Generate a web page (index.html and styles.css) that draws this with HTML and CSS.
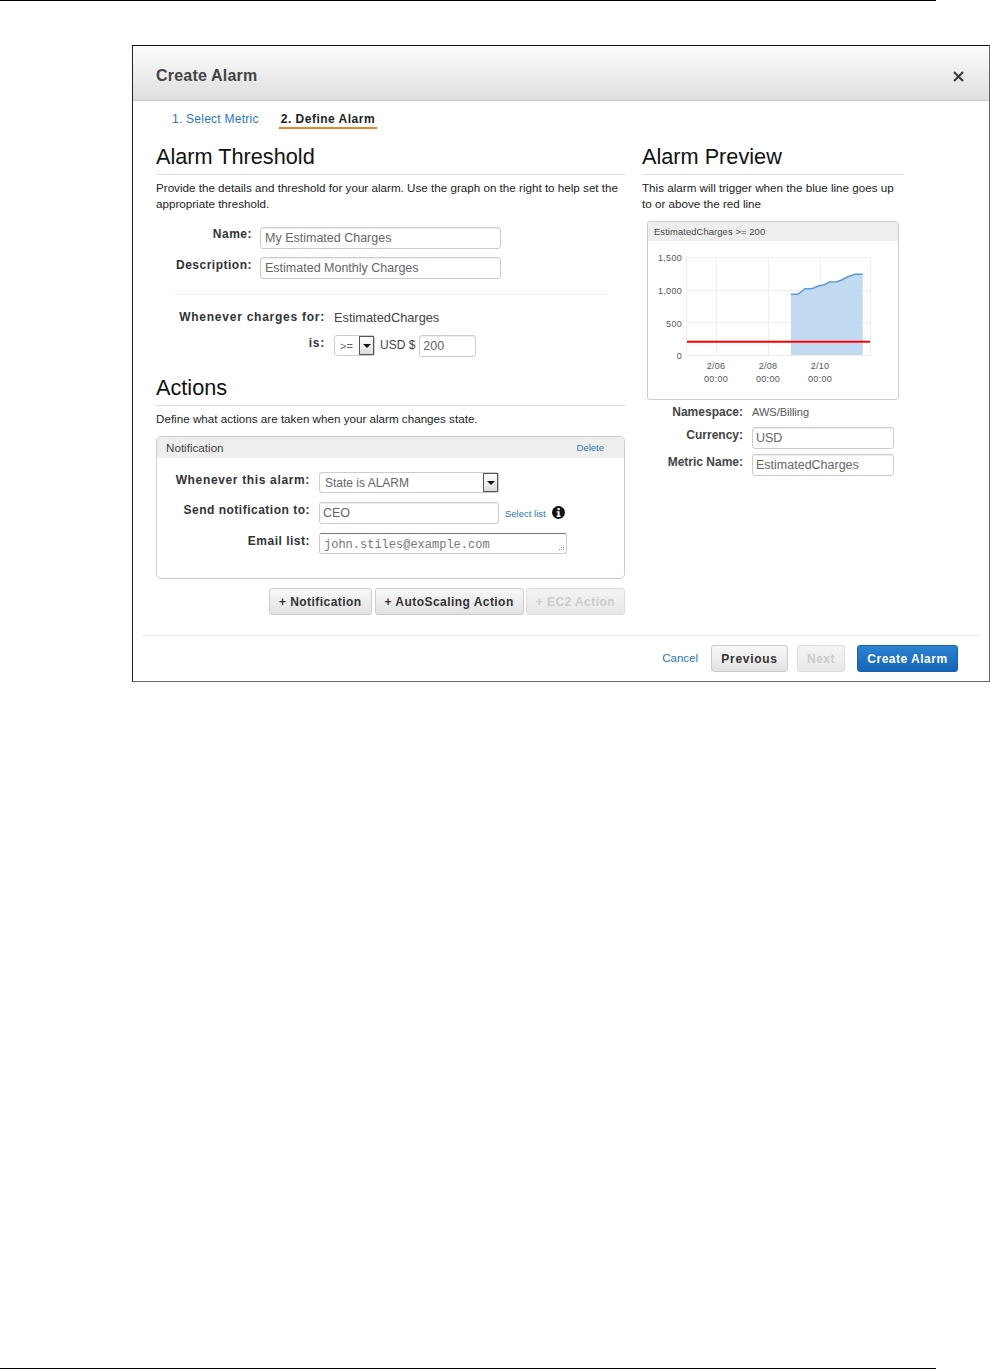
FILE: index.html
```html
<!DOCTYPE html>
<html lang="en">
<head>
<meta charset="utf-8">
<title>Create Alarm</title>
<link rel="stylesheet" href="styles.css">
</head>
<body>
<div class="page">
  <div class="rule"></div>
  <section class="modal">
    <header class="modal-head">
      <h1>Create Alarm</h1>
      <svg class="close" width="11" height="11" viewBox="0 0 11 11"><path d="M1 1 L10 10 M10 1 L1 10" fill="none" stroke="#3f3f3f" stroke-width="2.2"/></svg>
    </header>
    <nav class="tabs">
      <a class="tab">1. Select Metric</a>
      <a class="tab current">2. Define Alarm</a>
    </nav>
    <div class="body">
      <div class="col-left">
        <h2>Alarm Threshold</h2>
        <p class="intro">Provide the details and threshold for your alarm. Use the graph on the right to help set the appropriate threshold.</p>
        <div class="rows">
          <div class="row"><span class="label w-name">Name:</span><div class="field w-wide">My Estimated Charges</div></div>
          <div class="row"><span class="label w-name">Description:</span><div class="field w-wide">Estimated Monthly Charges</div></div>
        </div>
        <div class="divider"></div>
        <div class="row charges"><span class="label w-when">Whenever charges for:</span><span class="value">EstimatedCharges</span></div>
        <div class="row is-row">
          <span class="label w-when">is:</span>
          <div class="select w-op">&gt;=<span class="arrow"></span></div>
          <span class="value usd">USD $</span>
          <div class="field w-amount">200</div>
        </div>
        <h2 class="actions-title">Actions</h2>
        <p class="intro">Define what actions are taken when your alarm changes state.</p>
        <div class="box">
          <div class="box-head"><span>Notification</span><a class="link small">Delete</a></div>
          <div class="box-body">
            <div class="row"><span class="label w-notif track">Whenever this alarm:</span><div class="select w-state">State is ALARM<span class="arrow"></span></div></div>
            <div class="row"><span class="label w-notif">Send notification to:</span><div class="field w-state">CEO</div><a class="link small select-list">Select list</a>
              <svg class="info" width="13" height="13" viewBox="0 0 13 13"><circle cx="6.5" cy="6.5" r="6.5" fill="#111"/><rect x="5.5" y="2" width="2.2" height="2.2" fill="#fff"/><path d="M4.6 5.3 H7.6 V9.6 H8.6 V11 H4.6 V9.6 H5.6 V6.6 H4.6 Z" fill="#fff"/></svg>
            </div>
            <div class="row"><span class="label w-notif">Email list:</span>
              <div class="textarea">john.stiles@example.com
                <svg class="grip" width="8" height="8" viewBox="0 0 8 8"><path d="M6 1h1v1H6zM4 3h1v1H4zM6 3h1v1H6zM2 5h1v1H2zM4 5h1v1H4zM6 5h1v1H6z" fill="#999"/></svg>
              </div>
            </div>
          </div>
        </div>
        <div class="add-buttons">
          <button class="btn first">+ Notification</button>
          <button class="btn">+ AutoScaling Action</button>
          <button class="btn disabled">+ EC2 Action</button>
        </div>
      </div>
      <div class="col-right">
        <h2>Alarm Preview</h2>
        <p class="intro">This alarm will trigger when the blue line goes up to or above the red line</p>
        <div class="card">
          <div class="card-head">EstimatedCharges &gt;= 200</div>
          <svg class="chart" width="250" height="158" viewBox="0 0 250 158">
            <g stroke="#eee" stroke-width="1" fill="none">
              <path d="M38.5 16.5H222.5V114.5H38.5Z"/>
              <path d="M38.5 49.5H222.5M38.5 81.5H222.5M68.5 16.5V114.5M120.5 16.5V114.5M172.5 16.5V114.5"/>
            </g>
            <path d="M143 114V53.3H149.7L157 47.7H163.7L170.3 45L176.3 43.7L181.3 41L188.7 40.7L193.7 39L198.7 36.3L207 33.3H214.7V114Z" fill="#c2d9f2"/>
            <path d="M143 53.3H149.7L157 47.7H163.7L170.3 45L176.3 43.7L181.3 41L188.7 40.7L193.7 39L198.7 36.3L207 33.3H214.7" fill="none" stroke="#5a9bd8" stroke-width="1.6"/>
            <path d="M39 100.7H222" stroke="#f00" stroke-width="2"/>
            <g class="ticks" text-anchor="end">
              <text x="34" y="20">1,500</text>
              <text x="34" y="53">1,000</text>
              <text x="34" y="85.5">500</text>
              <text x="34" y="118">0</text>
            </g>
            <g class="ticks" text-anchor="middle">
              <text x="68" y="128">2/06</text>
              <text x="120" y="128">2/08</text>
              <text x="172" y="128">2/10</text>
              <text x="68" y="141">00:00</text>
              <text x="120" y="141">00:00</text>
              <text x="172" y="141">00:00</text>
            </g>
          </svg>
        </div>
        <div class="row ns-row"><span class="label w-meta">Namespace:</span><span class="value ns">AWS/Billing</span></div>
        <div class="meta-rows">
          <div class="row"><span class="label w-meta">Currency:</span><div class="field w-meta-field">USD</div></div>
          <div class="row"><span class="label w-meta">Metric Name:</span><div class="field w-meta-field">EstimatedCharges</div></div>
        </div>
      </div>
    </div>
    <footer class="modal-foot">
      <a class="link cancel">Cancel</a>
      <button class="btn foot-btn prev">Previous</button>
      <button class="btn foot-btn next disabled">Next</button>
      <button class="btn foot-btn primary">Create Alarm</button>
    </footer>
  </section>
  <div class="rule bottom"></div>
</div>
</body>
</html>
```
FILE: styles.css
```css
* { box-sizing: border-box; }
html, body { margin: 0; padding: 0; background: #fff; }
body { font-family: "Liberation Sans", Arial, sans-serif; font-size: 12px; color: #222; overflow: hidden; }
.page { height: 1369px; display: flex; flex-direction: column; }
.rule { width: 936px; height: 1px; background: #000; flex: none; }
.rule.bottom { margin-top: auto; }

.modal { margin: 44px 0 0 132px; width: 858px; border: 1px solid #666; border-top-color: #111; border-left-color: #222; flex: none; }
.modal-head { height: 55px; display: flex; align-items: center; justify-content: space-between; padding: 6px 25px 0 23px; background: linear-gradient(#fdfdfd, #dedede); border-bottom: 1px solid #c8c8c8; }
h1 { margin: 0; font-size: 16px; font-weight: bold; color: #444; letter-spacing: 0.2px; }

.tabs { height: 28px; display: flex; gap: 18px; padding: 10px 0 0 37px; }
.tab { height: 18px; line-height: 16px; padding: 0 2px; color: #2a76bd; font-size: 12px; letter-spacing: 0.25px; }
.tab.current { color: #222; font-weight: bold; border-bottom: 2px solid #e8872e; letter-spacing: 0.5px; }

.body { display: flex; gap: 17px; padding: 0 0 20px 23px; }
.col-left { width: 469px; flex: none; }
.col-right { width: 262px; flex: none; }

h2 { margin: 14px 0 0; height: 32px; line-height: 28px; font-size: 21.7px; font-weight: normal; color: #111; border-bottom: 1px solid #ddd; }
.intro { margin: 5px 0 0; line-height: 16px; color: #222; font-size: 11.65px; }

.rows { margin-top: 15px; display: flex; flex-direction: column; gap: 8px; }
.rows .row + .row .label { padding-top: 1px; }
.row { display: flex; align-items: flex-start; }
.label { flex: none; text-align: right; font-weight: bold; font-size: 12px; line-height: 15px; color: #333; letter-spacing: 0.5px; white-space: nowrap; }
.w-name { width: 96px; margin-right: 8px; }
.w-when { width: 169px; margin-right: 9px; letter-spacing: 0.75px; }
.is-row .w-when { padding-top: 1px; }
.w-notif { width: 153px; margin-right: 9px; padding-top: 1px; }
.track { letter-spacing: 0.65px; }
.w-meta { width: 101px; margin-right: 9px; letter-spacing: 0; color: #444; }

.field { height: 22px; line-height: 20px; border: 1px solid #ccc; border-radius: 3px; padding: 0 3px; font-size: 12.5px; color: #666; background: #fff; box-shadow: inset 0 1px 1px #eee; white-space: nowrap; }
.w-wide { width: 241px; padding-left: 4px; }
.w-amount { width: 57px; margin-left: 4px; }
.w-state { width: 180px; }
.w-meta-field { width: 142px; }

.select { position: relative; height: 21px; line-height: 20px; border: 1px solid #ccc; border-radius: 3px; padding: 0 5px; font-size: 12px; color: #666; background: #fff; }
.w-op { width: 41px; font-size: 11px; }
.arrow { position: absolute; top: 0; right: 0; bottom: 0; width: 15px; border: 1px solid #555; background: linear-gradient(#fff, #ddd); }
.arrow::after { content: ""; position: absolute; left: 3px; top: 7px; border: 4px solid transparent; border-top: 4px solid #111; border-bottom: 0; }

.divider { margin: 15px 0 0 18px; width: 433px; height: 1px; background: #eee; }
.charges { margin-top: 15px; height: 25px; }
.value { font-size: 12.8px; line-height: 15px; color: #444; white-space: nowrap; }
.is-row { height: 22px; }
.usd { margin: 3px 0 0 5px; font-size: 12px; }

.actions-title { margin-top: 17px; }
.box { margin-top: 9px; height: 143px; border: 1px solid #ccc; border-radius: 5px; overflow: hidden; }
.box-head { height: 21px; padding: 0 20px 0 9px; background: #eee; display: flex; justify-content: space-between; align-items: center; color: #444; font-size: 11.65px; }
.box-body { padding: 14px 0 0; display: flex; flex-direction: column; gap: 9px; }
.link { color: #2a76bd; }
.small { font-size: 9.5px; }
.select-list { margin: 6px 6px 0 6px; }
.info { margin-top: 4px; }
.textarea { position: relative; width: 248px; height: 21px; line-height: 23px; border: 1px solid #ccc; border-top-color: #777; border-radius: 3px; padding: 0 4px; font-family: "Liberation Mono", "Courier New", monospace; font-size: 12px; color: #777; white-space: nowrap; }
.grip { position: absolute; right: 1px; bottom: 1px; }

.add-buttons { margin-top: 9px; display: flex; justify-content: flex-end; gap: 2px; }
.btn { height: 27px; padding: 0 9px; border: 1px solid #ccc; border-radius: 3px; background: linear-gradient(#f8f8f8, #e2e2e2); font-family: inherit; font-size: 12px; font-weight: bold; color: #333; letter-spacing: 0.45px; white-space: nowrap; }
.btn.first { margin-right: 1px; }
.btn.disabled { color: #ccc; border-color: #ddd; background: linear-gradient(#f4f4f4, #e8e8e8); }

.card { margin: 9px 0 0 5px; width: 252px; height: 179px; border: 1px solid #ccc; border-radius: 3px; overflow: hidden; }
.card-head { height: 19px; line-height: 19px; padding-left: 6px; background: #eee; font-size: 9.4px; color: #444; letter-spacing: 0.1px; }
.chart { display: block; }
.ticks { font-family: "Liberation Sans", Arial, sans-serif; font-size: 9px; fill: #555; letter-spacing: 0.3px; }

.ns-row { margin-top: 5px; }
.ns { font-size: 11px; color: #555; }
.meta-rows { margin-top: 7px; display: flex; flex-direction: column; gap: 5px; }
.meta-rows .label { padding-top: 1px; }

.modal-foot { margin: 0 9px; height: 46px; border-top: 1px solid #eee; display: flex; align-items: flex-start; justify-content: flex-end; padding: 9px 22px 0 0; }
.cancel { margin: 6px 13px 0 0; font-size: 11.5px; line-height: 14px; }
.foot-btn { height: 27px; padding: 0; }
.prev { width: 77px; margin-right: 9px; letter-spacing: 0.7px; }
.next { width: 48px; margin-right: 12px; }
.primary { width: 101px; background: linear-gradient(#2d82d2, #1564b6); border-color: #1a5fa8; color: #fff; letter-spacing: 0.5px; }
```
